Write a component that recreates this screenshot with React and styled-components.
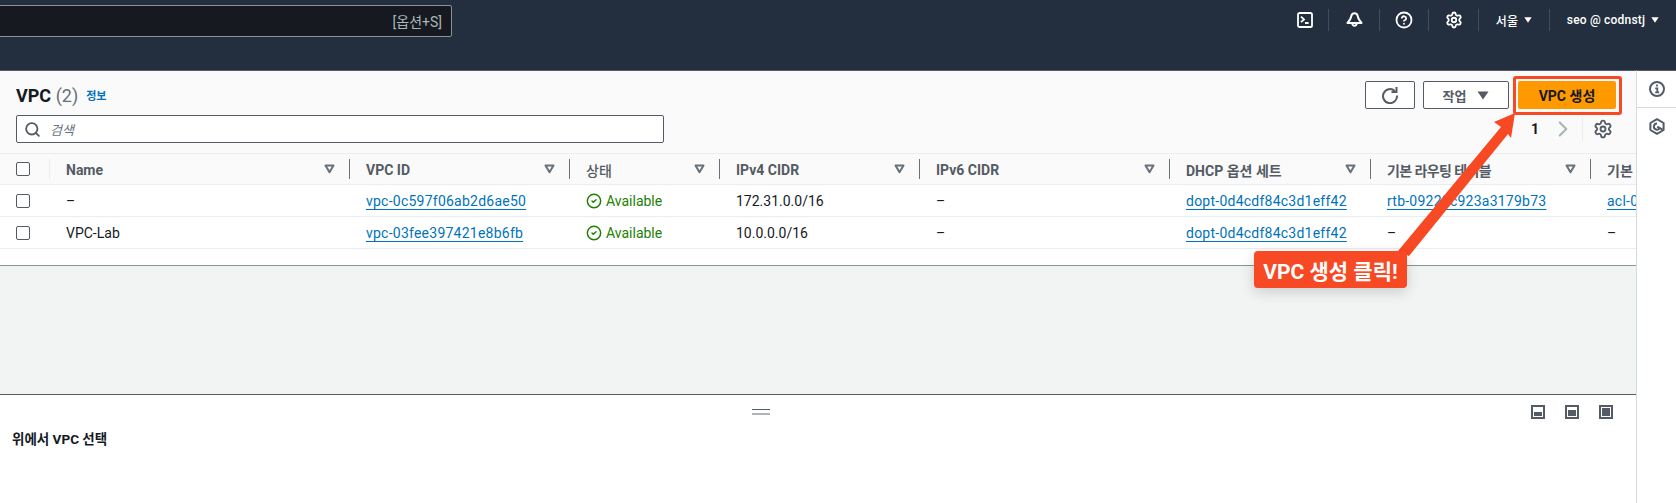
import React from 'react';
import styled, { createGlobalStyle } from 'styled-components';
import { Settings, CircleHelp, Search, CircleCheck, ChevronRight } from 'lucide-react';

const GlobalStyle = createGlobalStyle`
  html, body {
    margin: 0;
    padding: 0;
    background: #fff;
  }
  * {
    box-sizing: border-box;
  }
  body {
    font-family: Roboto, "Noto Sans CJK KR", sans-serif;
    color: #16191f;
  }
`;

const columns = '49px 300px 220px 150px 200px 250px 201px 220px 260px';

const headers = [
  { label: 'Name' },
  { label: 'VPC ID' },
  { label: '상태', plain: true },
  { label: 'IPv4 CIDR' },
  { label: 'IPv6 CIDR' },
  { label: 'DHCP 옵션 세트' },
  { label: '기본 라우팅 테이블', tight: true },
  { label: '기본 네트워크 ACL' },
];

const rows = [
  {
    name: '–',
    id: 'vpc-0c597f06ab2d6ae50',
    cidr: '172.31.0.0/16',
    dhcp: 'dopt-0d4cdf84c3d1eff42',
    route: 'rtb-09220c923a3179b73',
    acl: 'acl-0',
  },
  {
    name: 'VPC-Lab',
    id: 'vpc-03fee397421e8b6fb',
    cidr: '10.0.0.0/16',
    dhcp: 'dopt-0d4cdf84c3d1eff42',
    route: '',
    acl: '',
  },
];

function SortCaret() {
  return (
    <svg width="11" height="10" viewBox="0 0 11 10">
      <path d="M1.5 1.500h8L5.500 8.200z" fill="none" stroke="#687078" strokeWidth="2" strokeLinejoin="round" />
    </svg>
  );
}

function SolidCaret({ color, size }) {
  return (
    <svg width={size} height={size * 0.75} viewBox="0 0 12 9">
      <path d="M0.500 0.500h11L6 8.500z" fill={color} />
    </svg>
  );
}

function TerminalIcon() {
  return (
    <svg width="16" height="16" viewBox="0 0 16 16" fill="none" stroke="#fff" strokeWidth="1.8">
      <rect x="1" y="1" width="14" height="14" rx="1.600" />
      <path d="M4 4.600 7 7.400 4 10.200M8 11h3.600" />
    </svg>
  );
}

function BellIcon() {
  return (
    <svg width="17" height="16" viewBox="0 0 17 16" fill="none" stroke="#fff" strokeWidth="2" strokeLinejoin="round">
      <path d="M8.500 1.200c2 0 3 1.400 3.300 3.200.3 2 1.600 4 3.700 6.600h-14c2.100-2.600 3.400-4.600 3.700-6.600.3-1.800 1.300-3.200 3.300-3.200z" />
      <path d="M6.300 11.600a2.200 2.200 0 1 0 4.400 0" />
    </svg>
  );
}

function RefreshIcon() {
  return (
    <svg width="18" height="18" viewBox="0 0 18 18" fill="none" stroke="#545b64" strokeWidth="2">
      <path d="M13.800 5A7 7 0 1 0 16 9.500" />
      <path d="M15.500 1v5h-5" strokeLinejoin="miter" />
    </svg>
  );
}

function InfoIcon() {
  return (
    <svg width="16" height="16" viewBox="0 0 16 16" fill="none" stroke="#545b64" strokeWidth="2">
      <circle cx="8" cy="8" r="7" />
      <path d="M8 3.600v2M6.200 7.400H8.300v4M6.200 11.400h4" strokeWidth="1.800" />
    </svg>
  );
}

function HexIcon() {
  return (
    <svg width="16" height="17" viewBox="0 0 16 17" fill="none" stroke="#545b64" strokeWidth="2">
      <path d="M8 1.200 14.600 5v7L8 15.800 1.400 12V5z" strokeLinejoin="round" />
      <path d="M10.800 9.800A3.100 3.100 0 1 1 8 5.400M8.200 8.600l5.400 3" strokeWidth="2" />
    </svg>
  );
}

function App() {
  return (
    <Page>
      <GlobalStyle />

      <TopBar>
        <GlobalSearch>[옵션+S]</GlobalSearch>
        <Nav>
          <NavItem $width={47} $first><TerminalIcon /></NavItem>
          <NavItem $width={51}><BellIcon /></NavItem>
          <NavItem $width={49}><CircleHelp size={18} color="#fff" strokeWidth={2.4} /></NavItem>
          <NavItem $width={50}><Settings size={18} color="#fff" strokeWidth={2.4} /></NavItem>
          <NavItem $width={71}>서울 <SolidCaret color="#fff" size={8} /></NavItem>
          <NavItem $width={127}>seo @ codnstj <SolidCaret color="#fff" size={8} /></NavItem>
        </Nav>
      </TopBar>

      <Body>
        <Content>
          <ListPanel>
            <PanelHeader>
              <HeaderLeft>
                <TitleRow>
                  <Title>VPC <Count>(2)</Count></Title>
                  <InfoLink>정보</InfoLink>
                </TitleRow>
                <SearchBox>
                  <Search size={17} color="#545b64" strokeWidth={2.6} />
                  <SearchHint>검색</SearchHint>
                </SearchBox>
              </HeaderLeft>
              <HeaderRight>
                <Actions>
                  <Button $width={50}><RefreshIcon /></Button>
                  <Button $width={86}>작업 <SolidCaret color="#545b64" size={12} /></Button>
                  <PrimaryButton>VPC 생성</PrimaryButton>
                </Actions>
                <Pager>
                  <PageNumber>1</PageNumber>
                  <ChevronRight size={26} color="#aab7b8" strokeWidth={2} />
                  <PagerDivider />
                  <Settings size={20} color="#545b64" strokeWidth={2.2} />
                </Pager>
              </HeaderRight>
            </PanelHeader>

            <HeadRow>
              <CheckCell><Checkbox /></CheckCell>
              {headers.map((h, i) => (
                <HeadCell key={h.label} $light={i === 0}>
                  <HeadLabel $plain={h.plain} $tight={h.tight}>{h.label}</HeadLabel>
                  <SortCaret />
                </HeadCell>
              ))}
            </HeadRow>

            {rows.map((r) => (
              <Row key={r.id}>
                <CheckCell><Checkbox /></CheckCell>
                <Cell>{r.name}</Cell>
                <Cell><Anchor>{r.id}</Anchor></Cell>
                <Cell>
                  <Status>
                    <CircleCheck size={16} color="#1d8102" strokeWidth={2.2} />
                    Available
                  </Status>
                </Cell>
                <Cell>{r.cidr}</Cell>
                <Cell>–</Cell>
                <Cell><Anchor>{r.dhcp}</Anchor></Cell>
                <Cell>{r.route ? <Anchor>{r.route}</Anchor> : '–'}</Cell>
                <Cell>{r.acl ? <Anchor>{r.acl}</Anchor> : '–'}</Cell>
              </Row>
            ))}
          </ListPanel>

          <EmptyArea />

          <SplitPanel>
            <SplitToolbar>
              <DragHandle />
              <ViewIcons>
                <ViewIcon $fill={6} />
                <ViewIcon $fill={8} />
                <ViewIcon $fill={10} />
              </ViewIcons>
            </SplitToolbar>
            <SplitMessage>위에서 VPC 선택</SplitMessage>
          </SplitPanel>
        </Content>

        <Rail>
          <RailItem $h={37}><InfoIcon /></RailItem>
          <RailItem $h={37}><HexIcon /></RailItem>
        </Rail>
      </Body>

      <ArrowSvg width="140" height="170" viewBox="1390 100 140 170">
        <polygon points="1398,251 1501,127 1494,122 1515,113 1511,138 1508,134 1409,256" fill="#f74923" />
      </ArrowSvg>
      <Callout>VPC 생성 클릭!</Callout>
    </Page>
  );
}

const Page = styled.div`
  position: relative;
  width: 1676px;
  height: 503px;
  overflow: hidden;
`;

const TopBar = styled.header`
  height: 70px;
  background: #232f3e;
  display: flex;
  align-items: flex-start;
`;

const GlobalSearch = styled.div`
  width: 456px;
  height: 32px;
  margin: 5px 0 0 -4px;
  padding-right: 9px;
  background: #16191f;
  border: 1px solid #879596;
  border-radius: 2px;
  color: #aab7b8;
  font-size: 14px;
  display: flex;
  align-items: center;
  justify-content: flex-end;
`;

const Nav = styled.nav`
  margin: 9px 0 0 auto;
  height: 22px;
  display: flex;
`;

const NavItem = styled.div`
  width: ${(p) => p.$width}px;
  border-left: 1px solid ${(p) => (p.$first ? 'transparent' : '#414d5c')};
  display: flex;
  align-items: center;
  justify-content: center;
  gap: 6px;
  color: #fff;
  font-size: 12px;
  font-weight: 500;
  letter-spacing: 0.2px;
  white-space: nowrap;
`;

const Body = styled.div`
  display: flex;
  height: 433px;
`;

const Content = styled.main`
  width: 1636px;
  display: flex;
  flex-direction: column;
  overflow: hidden;
  border-top: 1px solid #545b64;
`;

const ListPanel = styled.section`
  height: 194px;
  background: #fff;
  flex: none;
`;

const PanelHeader = styled.div`
  height: 82px;
  background: #fafafa;
  padding: 10px 20px 0 16px;
  display: flex;
  justify-content: space-between;
`;

const HeaderLeft = styled.div`
  width: 648px;
`;

const TitleRow = styled.div`
  height: 34px;
  padding-bottom: 6px;
  display: flex;
  align-items: center;
  gap: 8px;
`;

const Title = styled.h1`
  margin: 0;
  font-size: 18px;
  font-weight: 700;
`;

const Count = styled.span`
  font-weight: 400;
  color: #687078;
`;

const InfoLink = styled.a`
  color: #0073bb;
  font-size: 11px;
  font-weight: 700;
`;

const SearchBox = styled.div`
  height: 28px;
  border: 1px solid #545b64;
  border-radius: 2px;
  background: #fff;
  padding-left: 7px;
  display: flex;
  align-items: center;
  gap: 9px;
`;

const SearchHint = styled.span`
  color: #687078;
  font-size: 13px;
  font-style: italic;
`;

const HeaderRight = styled.div`
  display: flex;
  flex-direction: column;
  align-items: flex-end;
`;

const Actions = styled.div`
  display: flex;
  gap: 8px;
`;

const Button = styled.button`
  width: ${(p) => p.$width}px;
  height: 28px;
  padding: 0;
  background: #fff;
  border: 1px solid #545b64;
  border-radius: 2px;
  color: #545b64;
  font: 700 13px Roboto, "Noto Sans CJK KR", sans-serif;
  display: flex;
  align-items: center;
  justify-content: center;
  gap: 11px;
`;

const PrimaryButton = styled.button`
  position: relative;
  width: 98px;
  height: 28px;
  margin-left: 1px;
  padding: 0;
  background: #ff9900;
  border: none;
  border-radius: 2px;
  color: #16191f;
  font: 700 14px Roboto, "Noto Sans CJK KR", sans-serif;

  &::after {
    content: '';
    position: absolute;
    inset: -5px -6px -6px -5px;
    border: 3px solid #f74923;
    border-radius: 3px;
  }
`;

const Pager = styled.div`
  height: 24px;
  margin-top: 8px;
  margin-right: 3px;
  display: flex;
  align-items: center;
`;

const PageNumber = styled.span`
  font-size: 14px;
  font-weight: 700;
  margin-right: 11px;
`;

const PagerDivider = styled.span`
  width: 1px;
  height: 24px;
  margin: 0 10px 0 6px;
  background: #eaeded;
`;

const HeadRow = styled.div`
  height: 32px;
  background: #fafafa;
  border-top: 1px solid #eaeded;
  border-bottom: 1px solid #eaeded;
  display: grid;
  grid-template-columns: ${columns};
  align-items: center;
`;

const Row = styled.div`
  height: 32px;
  border-bottom: 1px solid #eaeded;
  display: grid;
  grid-template-columns: ${columns};
  align-items: center;
`;

const CheckCell = styled.div`
  padding-left: 16px;
  display: flex;
`;

const Checkbox = styled.span`
  width: 14px;
  height: 14px;
  background: #fff;
  border: 1px solid #545b64;
  border-radius: 2px;
`;

const HeadCell = styled.div`
  height: 20px;
  padding: 0 14px 0 16px;
  border-left: 1px solid ${(p) => (p.$light ? '#eaeded' : '#687078')};
  display: flex;
  align-items: center;
  justify-content: space-between;
  overflow: hidden;
`;

const HeadLabel = styled.span`
  color: #545b64;
  font-size: 14px;
  font-weight: ${(p) => (p.$plain ? 500 : 700)};
  letter-spacing: ${(p) => (p.$tight ? '-0.6px' : '0')};
  padding-top: 1px;
  white-space: nowrap;
`;

const Cell = styled.div`
  height: 24px;
  padding-left: 17px;
  font-size: 14px;
  line-height: 24px;
  white-space: nowrap;
  overflow: hidden;
`;

const Anchor = styled.a`
  color: #0073bb;
  letter-spacing: 0.24px;
  text-decoration: underline;
  text-underline-offset: 3px;
`;

const Status = styled.span`
  color: #1d8102;
  height: 24px;
  display: flex;
  align-items: center;
  gap: 4px;
`;

const EmptyArea = styled.div`
  height: 129px;
  flex: none;
  background: #f2f3f3;
  border-top: 1px solid #879596;
`;

const SplitPanel = styled.section`
  flex: 1;
  border-top: 1px solid #545b64;
  background: #fff;
`;

const SplitToolbar = styled.div`
  height: 14px;
  margin-top: 10px;
  padding-right: 23px;
  display: flex;
  align-items: center;
`;

const DragHandle = styled.div`
  width: 18px;
  height: 6px;
  margin-left: 752px;
  border-top: 1px solid #545b64;
  border-bottom: 2px solid #aab7b8;
`;

const ViewIcons = styled.div`
  margin-left: auto;
  display: flex;
  gap: 20px;
`;

const ViewIcon = styled.div`
  width: 14px;
  height: 14px;
  border: 2px solid #545b64;
  display: flex;
  align-items: flex-end;
  padding: 1px;
  background: #fff;

  &::before {
    content: '';
    flex: 1;
    height: ${(p) => p.$fill - 2}px;
    background: #545b64;
  }
`;

const SplitMessage = styled.div`
  margin: 9px 0 0 12px;
  font-size: 13.500px;
  font-weight: 700;
`;

const Rail = styled.aside`
  flex: 1;
  border-left: 1px solid #d5dbdb;
  background: #fff;
  border-top: 1px solid #545b64;
`;

const RailItem = styled.div`
  height: ${(p) => p.$h}px;
  border-bottom: 1px solid #d5dbdb;
  display: flex;
  align-items: center;
  justify-content: center;

  &:last-child {
    border-bottom: none;
  }
`;

const ArrowSvg = styled.svg`
  position: absolute;
  left: 1390px;
  top: 100px;
`;

const Callout = styled.div`
  position: absolute;
  left: 1254px;
  top: 251px;
  width: 153px;
  height: 37px;
  background: #f74923;
  border-radius: 4px;
  box-shadow: 0 4px 14px rgba(0, 0, 0, 0.16);
  color: #fff;
  font-size: 21px;
  font-weight: 700;
  display: flex;
  align-items: center;
  justify-content: center;
  white-space: nowrap;
`;

export default App;
